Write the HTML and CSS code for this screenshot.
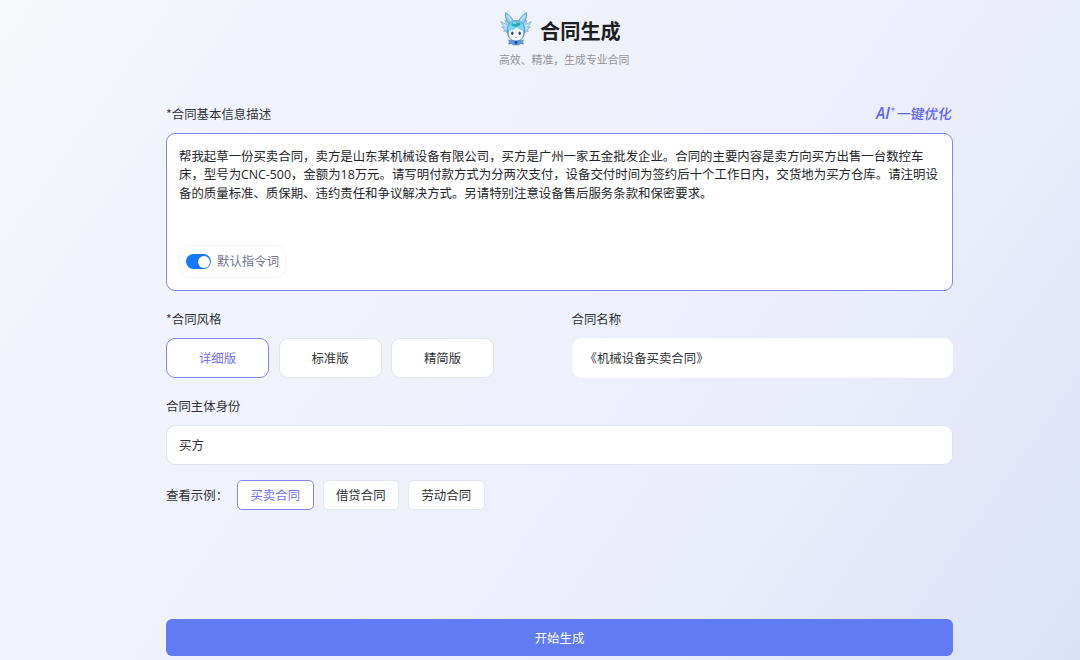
FILE: index.html
```html
<!DOCTYPE html>
<html lang="zh-CN">
<head>
<meta charset="utf-8">
<title>合同生成</title>
<link rel="stylesheet" href="styles.css">
</head>
<body>
<main class="page">
  <header class="header">
    <div class="brand">
      <svg class="mascot" viewBox="0 0 32 34" width="32" height="34" aria-hidden="true">
        <path d="M8 20.500 3.500 19l2-.8L1.500 15l3 .3L.5 9.500l6 3L5 8l6 5.500zM24 20.500l4.500-1.500-2-.8 4-3.200-3 .3 4-5.800-6 3L27 8l-6 5.500z" fill="#bfe6f8" stroke="#6795ca" stroke-width=".6"/>
        <path d="M10 13.500C6.500 9.500 5 5.500 5.500.6 10 3.500 13 7 14 11zM22 13.500c3.500-4 5-8 4.500-12.900C22 3.500 19 7 18 11z" fill="#86cdf0" stroke="#5a92cd" stroke-width=".8"/>
        <path d="M7 3.500c2.500 2 4 4.500 5 7.500M25 3.500c-2.500 2-4 4.500-5 7.500" fill="none" stroke="#c9eefb" stroke-width="1.500"/>
        <path d="m13 28-2.500.5-2-.5 1 2-1 2 3-.3 2 1.300h5l2-1.300 3 .3-1-2 1-2-2 .5L19 28z" fill="#5b9be0" stroke="#3f6bab" stroke-width=".5"/>
        <path d="M7 18c0-6 4-9.500 9-9.500s9 3.500 9 9.500c0 6.500-3.500 11-9 11s-9-4.500-9-11z" fill="#5aa9e0" stroke="#5283bb" stroke-width=".6"/>
        <path d="M8.800 21c0-4.500 2.700-6 7.200-6s7.200 1.500 7.200 6-3 7.400-7.200 7.400S8.800 25.500 8.800 21z" fill="#f7f9ff"/>
        <path d="M7.800 18c0-5.500 3.200-9 8.200-9s8.200 3.500 8.200 9c-3 .5-6-.5-7.400-2.500-2.300 2.500-5.800 3.500-9 2.500z" fill="#7ed5ef"/>
        <path d="M11 12.500c2-3.500 5.500-3.700 6.700-1.500 2-1.500 3.300 0 2.300 2-2.500 2.500-6.500 2.500-9-.5z" fill="#27a9b9"/>
        <path d="M13 11.500c1.200-1 2.500-.9 3.300-.2" fill="none" stroke="#b0f4ed" stroke-width="1.100"/>
        <ellipse cx="12.300" cy="21.300" rx="1.200" ry="1.700" fill="#344777"/>
        <ellipse cx="19.700" cy="21.300" rx="1.200" ry="1.700" fill="#344777"/>
        <path d="M15 25q1 .6 2 0" fill="none" stroke="#9b7486" stroke-width=".6"/>
        <circle cx="16" cy="30.500" r="1.400" fill="#183c7c"/>
      </svg>
      <h1 class="title">合同生成</h1>
    </div>
    <p class="subtitle">高效、精准，生成专业合同</p>
  </header>

  <section class="form">
    <div class="label-row">
      <span class="label">*合同基本信息描述</span>
      <span class="optimize"><span class="ai">AI</span><svg class="spark" viewBox="0 0 6 6" width="6" height="6"><path d="M3 0 3.600 2.400 6 3 3.600 3.600 3 6 2.400 3.600 0 3 2.400 2.400z" fill="#796bf4"/></svg><span class="optimize-text">一键优化</span></span>
    </div>
    <div class="description">
      <p class="prompt">帮我起草一份买卖合同，卖方是山东某机械设备有限公司，买方是广州一家五金批发企业。合同的主要内容是卖方向买方出售一台数控车<br>床，型号为<span class="latin">CNC-500</span>，金额为<span class="latin">18</span>万元。请写明付款方式为分两次支付，设备交付时间为签约后十个工作日内，交货地为买方仓库。请注明设<br>备的质量标准、质保期、违约责任和争议解决方式。另请特别注意设备售后服务条款和保密要求。</p>
      <div class="default-prompt"><span class="switch"><span class="knob"></span></span>默认指令词</div>
    </div>

    <div class="columns">
      <div class="style-field">
        <div class="label">*合同风格</div>
        <div class="options">
          <div class="option active">详细版</div>
          <div class="option">标准版</div>
          <div class="option">精简版</div>
        </div>
      </div>
      <div class="name-field">
        <div class="label">合同名称</div>
        <div class="input name-input">《机械设备买卖合同》</div>
      </div>
    </div>

    <div class="label party-label">合同主体身份</div>
    <div class="input">买方</div>

    <div class="examples">
      <span class="examples-label">查看示例：</span>
      <span class="tag active">买卖合同</span>
      <span class="tag">借贷合同</span>
      <span class="tag">劳动合同</span>
    </div>
    <div class="submit">开始生成</div>
  </section>
</main>
</body>
</html>
```

FILE: styles.css
```css
* { box-sizing: border-box; }
body {
  margin: 0;
  font-family: "Noto Sans CJK SC", sans-serif;
  font-size: 12.42px;
  line-height: 18.6px;
  color: #303238;
}
h1, p { margin: 0; }
.page {
  height: 660px;
  overflow: hidden;
  padding: 12px 127px 0 166px;
  background: linear-gradient(125deg, #f6f8fb 0%, #f2f4fd 18%, #eff1fb 45%, #eaedfa 72%, #e0e5f9 88%, #dbe2f7 100%);
}
.header { height: 92px; padding-left: 333px; }
.brand { display: flex; align-items: center; height: 38px; gap: 8px; }
.mascot { flex: none; margin: -4px 0 0 1px; }
.title { font-size: 20.2px; font-weight: 700; line-height: 30px; color: #1d1e22; }
.subtitle { font-size: 10.88px; line-height: 18px; color: #929398; white-space: nowrap; }
.label-row { display: flex; justify-content: space-between; height: 29px; }
.label { height: 20px; line-height: 20px; white-space: nowrap; }
.optimize { display: flex; height: 19px; margin-right: 1px; color: #5f66f2; font-weight: 500; }
.ai { font: italic 600 15.5px/18px "Open Sans", sans-serif; }
.spark { margin: 2px 1px 0 0; }
.optimize-text { font-size: 13.8px; line-height: 18px; transform: skewX(-8deg); }
.description {
  display: flex;
  flex-direction: column;
  justify-content: space-between;
  height: 158px;
  padding: 12.500px 12px 12px;
  border: 1px solid #8585f8;
  border-radius: 9px;
  background: #fff;
}
.prompt { white-space: nowrap; color: #24262b; line-height: 18.75px; }
.latin { font-family: "Open Sans", sans-serif; line-height: 1; letter-spacing: -.05px; }
.default-prompt {
  display: flex;
  align-items: center;
  gap: 6px;
  width: 107px;
  height: 33px;
  padding-left: 6px;
  border: 1px solid #f5f5f8;
  border-radius: 10px;
  color: #737890;
}
.switch { display: flex; justify-content: flex-end; align-items: center; width: 25px; height: 15px; padding-right: 1px; border-radius: 8px; background: #1677ff; }
.knob { width: 12px; height: 12px; border-radius: 50%; background: #fff; }
.columns { display: flex; justify-content: space-between; margin-top: 18px; }
.options { display: flex; gap: 9.500px; margin-top: 9px; }
.option { width: 103px; height: 40px; border: 1px solid #e3e5f3; border-radius: 9px; background: #fff; line-height: 38px; text-align: center; }
.active.option, .active.tag { border-color: #8585f8; color: #7472f4; }
.name-field { width: 381.500px; }
.input { height: 40px; padding: 0 12px; border: 1px solid #e0e3f2; border-radius: 9px; background: #fff; line-height: 38px; }
.name-input { margin-top: 9px; border-color: #fafaff; }
.party-label { margin: 18px 0 9px; }
.examples { display: flex; align-items: center; height: 30px; margin-top: 15px; }
.examples-label { width: 71px; white-space: nowrap; }
.tag { width: 76.500px; height: 29.500px; margin-right: 9px; border: 1px solid #e5e7f3; border-radius: 5px; background: #fff; line-height: 28px; text-align: center; }
.submit { height: 37px; margin-top: 109px; border-radius: 6px; background: #617bf2; color: #fff; line-height: 38px; text-align: center; }
```
